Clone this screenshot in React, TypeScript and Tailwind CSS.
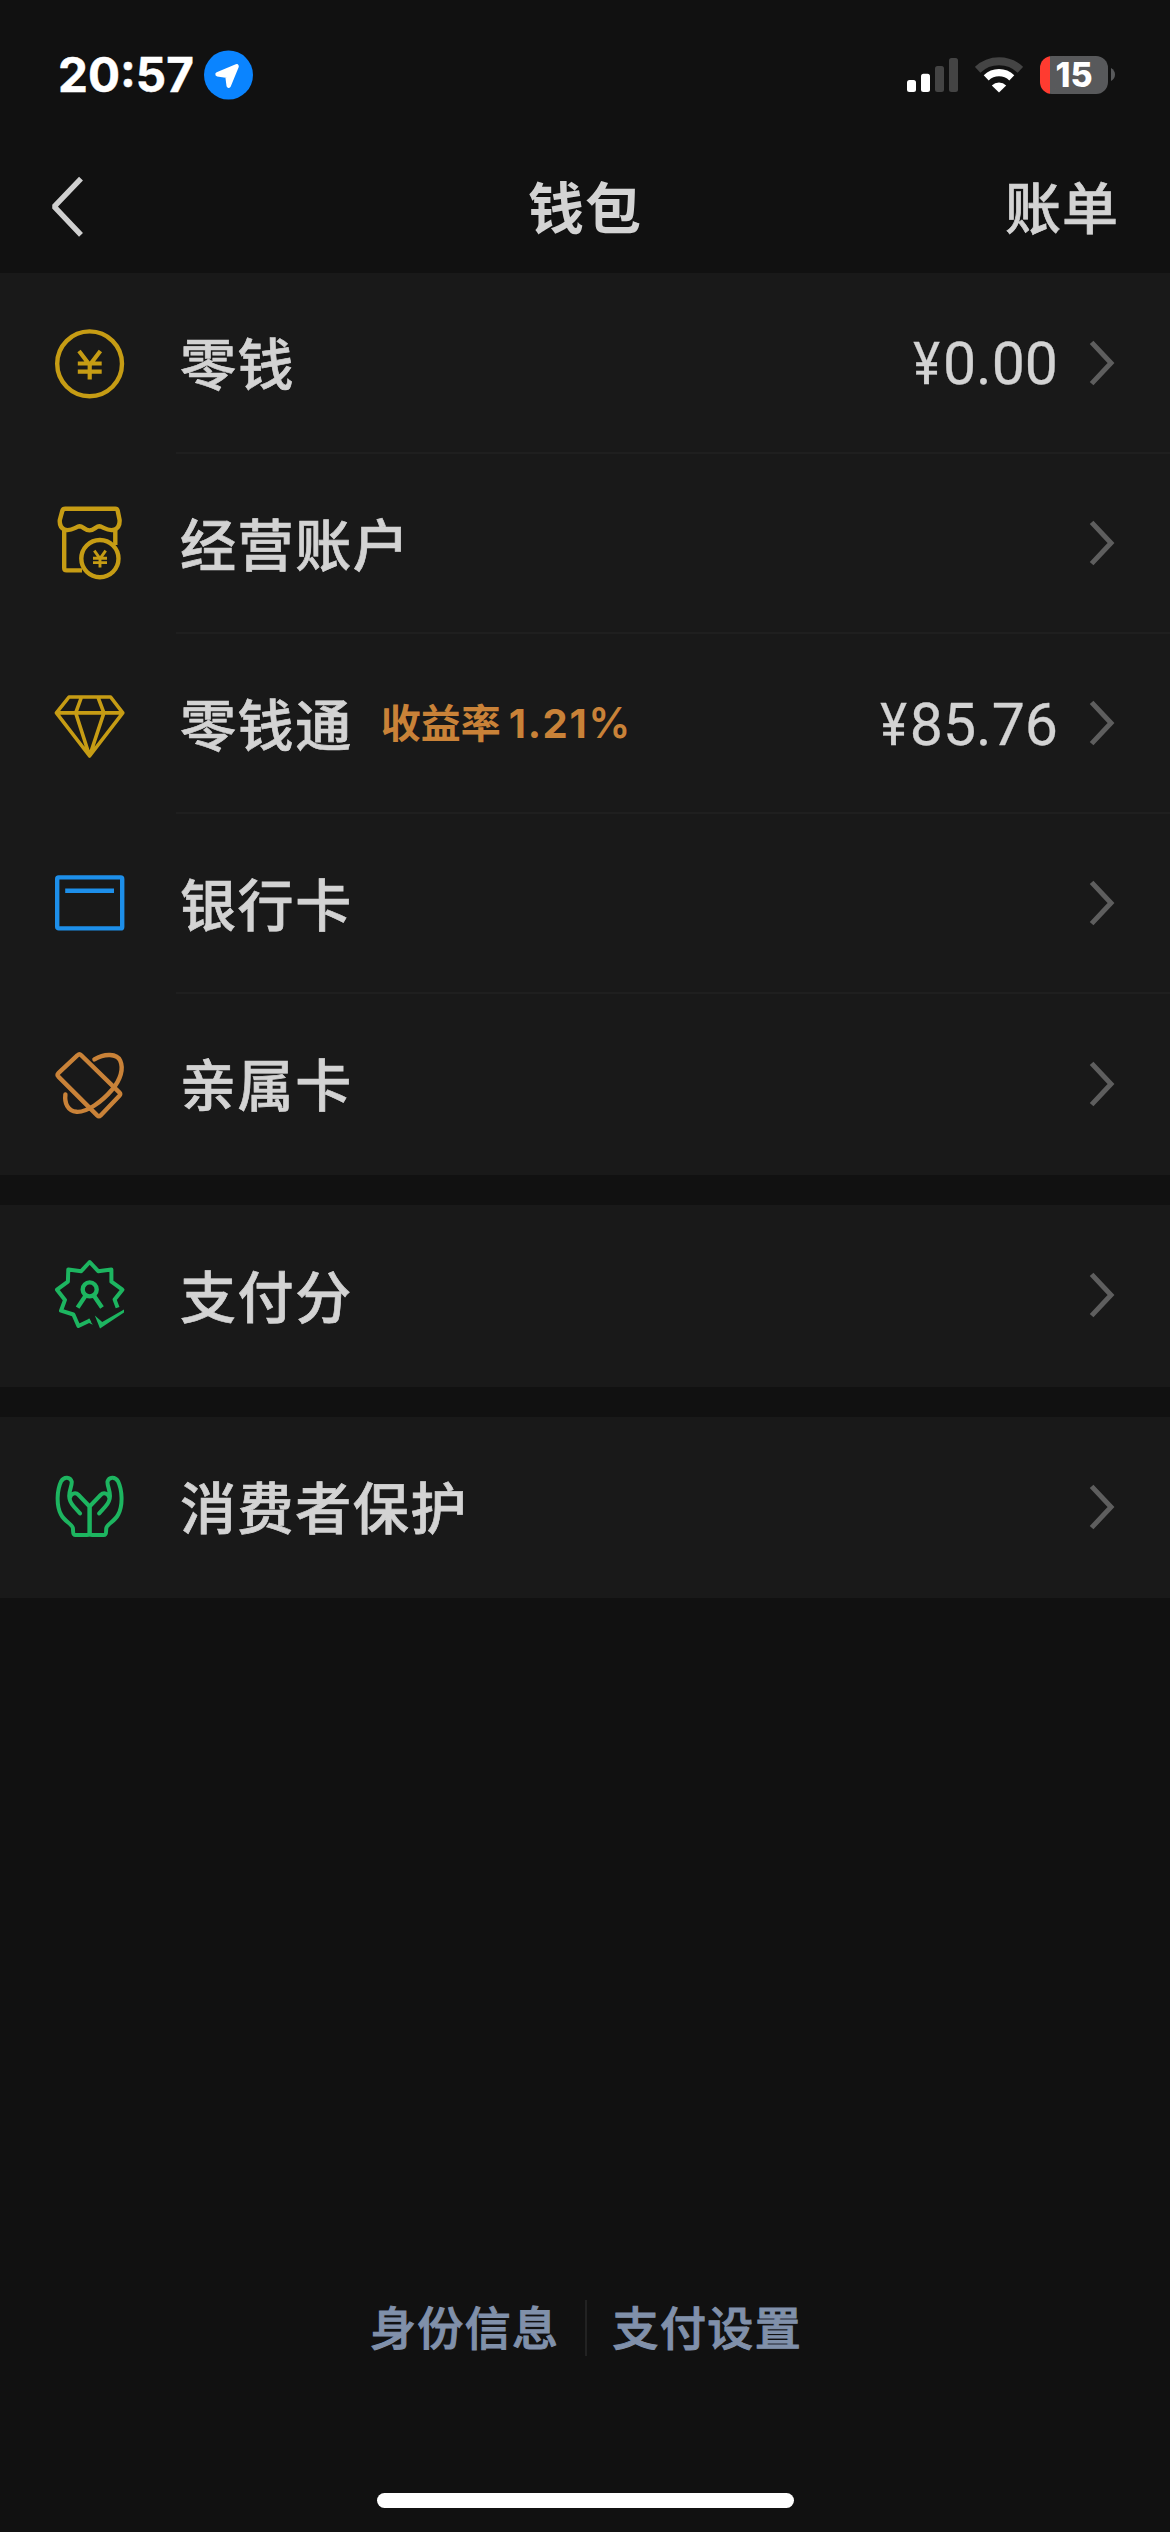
import React from "react";

const YELLOW = "#c69c14";
const ORANGE = "#c98238";
const GREEN = "#1db560";

type IconProps = { color: string; children: React.ReactNode };

function Icon({ color, children }: IconProps) {
  return (
    <svg
      className="-mt-[2px] h-[72px] w-[72px] shrink-0 overflow-visible"
      viewBox="0 0 72 72"
      fill="none"
      stroke={color}
      strokeWidth={4.4}
      strokeLinejoin="round"
      strokeLinecap="round"
    >
      {children}
    </svg>
  );
}

function CoinIcon() {
  return (
    <Icon color={YELLOW}>
      <circle cx="36.6" cy="36.8" r="32.4" />
      <path
        d="M26 24 L36.7 38 L47.4 24 M36.7 36 V52.5 M24.8 36.5 H48.7 M24.8 44.7 H48.7"
        strokeLinecap="butt"
        strokeLinejoin="miter"
        strokeWidth="4.2"
      />
    </Icon>
  );
}

function StoreIcon() {
  return (
    <Icon color={YELLOW}>
      <path d="M12.3 1.8 H62.3 Q64.2 1.8 64.7 3.8 L66.6 13 Q67 20.5 61.3 22.7 C54.5 24.8 50 19.5 46.4 19.3 C43 19.3 41 23.4 36.5 23.4 C32 23.4 30 19.3 26.6 19.3 C23 19.5 18.5 24.8 11.7 22.7 Q6.2 20.5 6.8 13 L9.3 3.8 Q9.9 1.8 12.3 1.8 Z" />
      <path d="M11.2 23 V61 Q11.2 63.4 13.6 63.4 H29 M62.3 23 V38" strokeLinecap="butt" />
      <circle cx="46.9" cy="51.6" r="18.6" />
      <path
        d="M41.3 43.6 L47 51.6 L52.7 43.6 M47 51.6 V60.6 M40 51.2 H54 M40 55.6 H54"
        strokeLinecap="butt"
        strokeWidth="2.9"
      />
    </Icon>
  );
}

function DiamondIcon() {
  return (
    <Icon color={YELLOW}>
      <path
        d="M16 10 H57.6 L69.8 25.9 L36.6 69 L3.4 25.9 Z M3.4 25.9 H69.8 M28.5 10 L22.7 25.9 L36.6 69 L50.9 25.9 L44.9 10"
        strokeWidth="3.6"
      />
    </Icon>
  );
}

function BankCardIcon() {
  return (
    <Icon color="#1d8fea">
      <rect x="4.2" y="10.4" width="65" height="51" rx="1.5" />
      <path d="M12.2 23.8 H61" strokeLinecap="butt" strokeWidth="4.6" />
    </Icon>
  );
}

function FamilyCardIcon() {
  return (
    <Icon color={ORANGE}>
      <path d="M24.6 7.2 Q26.4 5.4 28.2 7.2 L66.3 44.3 Q68 46 66.4 47.8 L47.6 67.4 Q45.9 69 44.2 67.4 L5.4 28.6 Q3.8 26.9 5.4 25.2 Z" />
      <path d="M41.4 11.4 C52 5 64 5.8 67.2 12.6 C70.8 20.4 67.8 31.5 58.8 42 C49 53.5 34 64.5 23.5 63.8 C14.5 63 11.4 55 12.4 46.4" />
    </Icon>
  );
}

function ScoreIcon() {
  return (
    <Icon color={GREEN}>
      <path
        d="M64.6 48.6 L61.6 40.6 L69.4 30.7 L58.4 22.7 L58.4 10.4 L45.2 12.2 L36.7 3 L28.2 12.2 L15.3 10.4 L14.9 22.7 L4 30.7 L12 40.9 L8 51.7 L20.4 55.5 L25.4 67 L37.4 61.2"
        strokeLinecap="butt"
        strokeWidth="4"
      />
      <path d="M35.6 59.6 L39.8 65.8 L34.5 63.2 Z" fill={GREEN} stroke="none" />
      <path d="M41.8 56.4 L49.2 63 L71 50.4 V53.6 L47 69.4 Z" fill={GREEN} stroke="none" />
      <circle cx="36.7" cy="30.4" r="7" />
      <path d="M32.6 36.6 L24.6 48.6 M40.8 36.6 L49 48.6" strokeLinecap="butt" />
    </Icon>
  );
}

function HandsIcon() {
  const hand =
    "M36.6 35.5 V61.5 Q36.6 64 34 64 H22.6 C19 64 20.6 60 19.8 56.8 C18.8 53 11.5 50.5 8 43.5 C3 34 4 19 8.2 10.2 C11 5.2 17.4 5.6 18.7 10.6 C19.2 14.5 16.2 18.5 16.2 25 C16.2 29 18 32.4 21 35.8 L27 42.4 M17 26.8 C17.5 22.4 22.5 20.8 25.6 24 L36.6 35.5";
  return (
    <Icon color={GREEN}>
      <path d={hand} strokeWidth="4" />
      <path d={hand} strokeWidth="4" transform="translate(73.2 0) scale(-1 1)" />
    </Icon>
  );
}

function Chevron() {
  return (
    <svg className="h-[48px] w-[26px] shrink-0" viewBox="0 0 26 48" fill="none">
      <path d="M2.6 3.4 L22 24 L2.6 44.6" stroke="#5e5e5e" strokeWidth="5" />
    </svg>
  );
}

type RowProps = {
  icon: React.ReactNode;
  label: string;
  note?: React.ReactNode;
  amount?: string;
  divider?: boolean;
};

function Row({ icon, label, note, amount, divider }: RowProps) {
  return (
    <div className="flex h-full items-center pl-[53px]">
      {icon}
      <div
        className={
          "ml-[51px] flex h-full flex-1 items-center border-b-2 pr-[55px] pl-[4px] " +
          (divider ? "border-[#1f1f1f]" : "border-transparent")
        }
      >
        <span className="-mt-[3px] text-[56px] leading-[80px] font-medium tracking-[1.6px] whitespace-nowrap [-webkit-text-stroke:0.7px]">
          {label}
        </span>
        {note}
        <span className="ml-auto flex items-center">
          {amount && (
            <span className="mt-[3px] mr-[31px] flex font-['Roboto'] text-[59px] leading-[60px] text-[#d3d3d3] [-webkit-text-stroke:0.3px]">
              <span className="mr-[1px] inline-block scale-x-[0.86]">¥</span>
              {amount}
            </span>
          )}
          <Chevron />
        </span>
      </div>
    </div>
  );
}

function StatusBar() {
  return (
    <div className="flex h-[141px] items-center justify-between pt-[8px] pr-[55px] pl-[58px]">
      <div className="flex items-center">
        <span className="w-[146px] font-['Inter'] text-[47.5px] leading-[50px] font-bold whitespace-nowrap text-white [-webkit-text-stroke:0.5px]">
          20:57
        </span>
        <svg className="h-[50px] w-[50px]" viewBox="0 0 50 50">
          <circle cx="24.5" cy="25" r="24.5" fill="#0a84ff" />
          <path
            d="M13.5 24.2 L32.6 16.4 L24.7 35.6 L23.4 25.7 Z"
            fill="#fff"
            stroke="#fff"
            strokeWidth="4.4"
            strokeLinejoin="round"
          />
        </svg>
      </div>
      <div className="flex items-center">
        <svg className="h-[36px] w-[52px]" viewBox="0 0 52 36">
          <rect x="0" y="23" width="9" height="12" rx="2.5" fill="#fff" />
          <rect x="14" y="16.8" width="9" height="18.2" rx="2.5" fill="#fff" />
          <rect x="28" y="9" width="9" height="26" rx="2.5" fill="#444" />
          <rect x="42" y="1" width="9" height="34" rx="2.5" fill="#444" />
        </svg>
        <svg className="ml-[16px] h-[36px] w-[48px]" viewBox="0 0 48 36" fill="none">
          <path d="M2.6 12.8 A31 31 0 0 1 45.4 12.8" stroke="#444" strokeWidth="8" />
          <path d="M11.2 20.8 A18.6 18.6 0 0 1 36.8 20.8" stroke="#fff" strokeWidth="7.2" />
          <path d="M24 35.6 L16.8 28.4 A10.4 10.4 0 0 1 31.2 28.4 Z" fill="#fff" />
        </svg>
        <div className="ml-[17px] flex h-[38px] w-[68px] items-center justify-center rounded-[12px] bg-linear-to-r from-[#ff3b30] from-15% to-[#58595b] to-15% font-['Inter'] text-[34px] leading-[38px] font-extrabold text-white">
          15
        </div>
        <svg className="ml-[3px] h-[13px] w-[4px]" viewBox="0 0 4 13">
          <path d="M0 0 Q4 2.5 4 6.5 T0 13 Z" fill="#58595b" />
        </svg>
      </div>
    </div>
  );
}

export default function App() {
  return (
    <div className="flex h-[2532px] w-[1170px] flex-col overflow-hidden bg-[#111111] font-['Noto_Sans_CJK_SC',sans-serif] text-[#d3d3d3]">
      <StatusBar />

      <header className="grid h-[132px] grid-cols-3 items-center">
        <svg className="ml-[49px] h-[64px] w-[36px]" viewBox="0 0 36 64" fill="none">
          <path d="M32 3.6 L5.2 31.6 L32 59.8" stroke="#d0d0d0" strokeWidth="5.4" strokeLinejoin="bevel" />
        </svg>
        <h1 className="-mt-[5px] text-center text-[56px] leading-[80px] font-bold tracking-[1px]">钱包</h1>
        <span className="-mt-[5px] pr-[51px] text-right text-[56px] leading-[80px] font-medium tracking-[1px] [-webkit-text-stroke:0.7px]">
          账单
        </span>
      </header>

      <section className="grid h-[902px] grid-rows-[181px_180px_180px_180px_181px] bg-[#191919]">
        <Row icon={<CoinIcon />} label="零钱" amount="0.00" divider />
        <Row icon={<StoreIcon />} label="经营账户" divider />
        <Row
          icon={<DiamondIcon />}
          label="零钱通"
          amount="85.76"
          divider
          note={
            <span className="-mt-[2px] ml-[28px] flex items-baseline text-[40px] leading-[60px] font-bold text-[#c98238]">
              收益率
              <span className="ml-[8px] font-['Inter'] text-[40px] tracking-[1.6px]">
                1.21<span className="text-[42px] font-semibold">%</span>
              </span>
            </span>
          }
        />
        <Row icon={<BankCardIcon />} label="银行卡" divider />
        <Row icon={<FamilyCardIcon />} label="亲属卡" />
      </section>

      <section className="mt-[30px] h-[182px] bg-[#191919]">
        <Row icon={<ScoreIcon />} label="支付分" />
      </section>

      <section className="mt-[30px] h-[181px] bg-[#191919]">
        <Row icon={<HandsIcon />} label="消费者保护" />
      </section>

      <footer className="mt-auto flex flex-col items-center">
        <div className="ml-[2px] flex items-center text-[46px] leading-[56px] font-medium tracking-[1.4px] text-[#8090aa] [-webkit-text-stroke:1px]">
          <span className="-mt-[6px]">身份信息</span>
          <span className="mr-[26px] ml-[25px] h-[56px] w-[2px] bg-[#222222]" />
          <span className="-mt-[6px]">支付设置</span>
        </div>
        <div className="mt-[137px] mb-[24px] h-[15px] w-[417px] rounded-full bg-white" />
      </footer>
    </div>
  );
}
